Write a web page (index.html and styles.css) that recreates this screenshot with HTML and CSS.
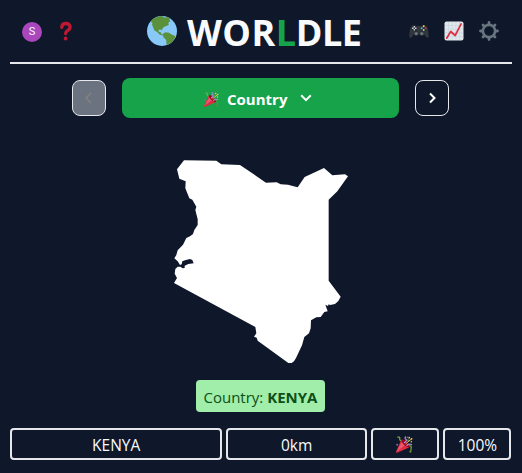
FILE: index.html
```html
<!DOCTYPE html>
<html lang="en">
<head>
<meta charset="utf-8">
<title>Worldle</title>
<link rel="stylesheet" href="styles.css">
</head>
<body>
<svg class="defs" aria-hidden="true">
  <symbol id="party" viewBox="0 0 36 36">
    <path fill="#A0041E" d="M23 13c4.700 4.700 7 9.700 5.400 11.200s-6.500-.8-11.200-5.400-7-9.600-5.500-11.200S18.400 8.300 23 13z"/>
    <path fill="#DD2E44" d="M11.600 7.600c-.2.2-.3.4-.4.6L.1 33.100c-.3.6.1 1.300.5 1.900.5.6 1.200.9 1.900.7l25.100-11.100c.2-.1.4-.2.5-.4-1 .8-6.300-.8-11-5.500S10.500 9 11.600 7.600z"/>
    <path fill="#EA596E" d="M12 14 1 33l8-6 9-7z"/>
    <path fill="none" stroke="#AA8DD8" stroke-width="2.800" stroke-linecap="round" d="M18 14q6-4 3-7-3-1-1-5"/>
    <path fill="none" stroke="#77B255" stroke-width="2.600" stroke-linecap="round" d="M4 2.500q5-1 4 3-1 3 2 4"/>
    <path fill="none" stroke="#5C913B" stroke-width="3.200" stroke-linecap="round" d="M29 20.500q5 1 3 5 0 4-1 8"/>
    <path fill="none" stroke="#AA8DD8" stroke-width="2.600" stroke-linecap="round" d="M23 20q4-4 10-2"/>
    <path fill="none" stroke="#FFCC4D" stroke-width="2" stroke-linecap="round" d="M21 16 32 7"/>
    <g fill="#5C913B"><circle cx="25.500" cy="9" r="2"/><circle cx="30" cy="33" r="2"/></g>
    <g fill="#9266CC"><circle cx="2.500" cy="18.500" r="2"/><circle cx="24" cy="2.500" r="1.600"/></g>
    <g fill="#FFCC4D"><circle cx="28" cy="3.500" r="1.800"/><circle cx="33" cy="6" r="1.900"/><circle cx="32.500" cy="12" r="1.600"/></g>
  </symbol>
</svg>
<div class="app">
  <header class="header">
    <div class="tools">
      <span class="avatar">S</span>
      <svg class="question" viewBox="0 0 14 20"><path d="M2.700 6.300C2.900 3.700 4.600 2.500 7 2.500c2.400 0 4.100 1.500 4.100 3.800 0 3.300-4.500 2.800-4.500 6.200" fill="none" stroke="#BE1931" stroke-width="3.300" stroke-linecap="round"/><circle cx="6.600" cy="17.500" r="1.900" fill="#BE1931"/></svg>
    </div>
    <div class="brand">
      <svg class="globe" viewBox="0 0 30 30">
        <circle cx="15" cy="15" r="15" fill="#88C9F9"/>
        <path fill="#5C913B" d="M3.500 5.500C6 2.500 10 .6 13.500.1l2.500.4 1.500 1.200 3-.7 2.700 1.300-.9 1.300 1 1.700-2 1.400.4 2.200-2.400 1.200-2 .6-1.600 1.600-.9 2-1.400-.9-1.900.7.4 1.700 1.900.5.6 1.600 1.900.8-.8.800-3-1-2.400-2.500-2.700-1.500L6 11 5 8.500 5.500 7z"/>
        <path fill="#5C913B" d="m16.300 17.500 2.200-1.200 3.500.5 2.200 1.500 3.600 1.500.5 1.600-1.900 2.700-1.600 2.300-2.600 1.200-1.400 1.500-1.300-.7-.3-4.500-2.600-2.400-.8-2.200z"/>
      </svg>
      <h1 class="title"><span class="lead">WOR</span><span class="accent">L</span>DLE</h1>
    </div>
    <div class="tools tools-right">
      <svg class="icon" viewBox="0 0 20 20">
        <path fill="#31373D" d="M.3 15.500C.2 11.500 1.200 6 2.700 4.800c1.200-1 3.200-1 4.300 0 .4.500 5.500.5 6 0 1.100-1 3.100-1 4.300 0 1.500 1.200 2.500 6.700 2.400 10.700-.1 2-2.200 1.500-3 .1l-1.500-2.300H4.800l-1.500 2.300c-.8 1.400-2.900 1.900-3-.1z"/>
        <circle cx="5.300" cy="7.200" r="2.900" fill="#24292d"/><circle cx="14.700" cy="7.200" r="2.900" fill="#24292d"/>
        <circle cx="7.200" cy="12.600" r="2.500" fill="#292F33"/><circle cx="12.800" cy="12.600" r="2.500" fill="#292F33"/>
        <circle cx="7.200" cy="12.600" r="1.700" fill="#66757F"/><circle cx="12.800" cy="12.600" r="1.700" fill="#66757F"/>
        <path d="M5.300 5v1.500M5.300 7.900v1.500M3.100 7.200h1.500M6 7.200h1.500" stroke="#CCD6DD" stroke-width="1.400"/>
        <circle cx="14.700" cy="5.300" r="1" fill="#FFCC4D"/><circle cx="16.700" cy="7.200" r="1" fill="#DD2E44"/><circle cx="12.700" cy="7.200" r="1" fill="#55ACEE"/><circle cx="14.700" cy="9.100" r="1" fill="#A6D388"/>
      </svg>
      <svg class="icon" viewBox="0 0 20 20">
        <rect x=".5" y=".5" width="19" height="19" rx="2" fill="#E1E8ED"/>
        <path d="M4.500 1v18M8.200 1v18M11.900 1v18M15.600 1v18M1 4.500h18M1 8.200h18M1 11.900h18M1 15.600h18" stroke="#CCD6DD" stroke-width=".8"/>
        <path d="m2.700 17.200 4-6.700 4.500 4 5.900-11.600" fill="none" stroke="#DD2E44" stroke-width="1.700" stroke-linecap="round" stroke-linejoin="round"/>
      </svg>
      <svg class="icon gear" viewBox="0 0 20 20">
        <circle cx="10" cy="10" r="6.100" fill="none" stroke="#66757F" stroke-width="2.600"/>
        <g stroke="#66757F" stroke-width="2.800" stroke-linecap="round"><path d="M10 1.500v1.500M10 17v1.500M1.500 10H3M17 10h1.500M4 4l1.200 1.200M14.800 14.800 16 16M4 16l1.200-1.200M14.800 5.200 16 4"/></g>
      </svg>
    </div>
  </header>

  <nav class="picker">
    <button class="step step-off" disabled><svg viewBox="0 0 12 12"><path d="M8 1 3 6l5 5"/></svg></button>
    <button class="round"><svg class="party-small"><use href="#party"/></svg><span class="round-name">Country</span><svg class="chevron" viewBox="0 0 12 8"><path d="m1.200 1.300 4.800 4.800 4.800-4.800"/></svg></button>
    <button class="step"><svg viewBox="0 0 12 12"><path d="m4 1.500 4.500 4.500L4 10.500"/></svg></button>
  </nav>

  <svg class="shape" viewBox="0 0 570 660">
    <path fill="#fff" d="M57 31 154 32 169 43 225 45 303 98 335 97 347 103 369 104 386 109 398 112 419 81 440 71 477 54 502 76 540 73 549 79 517 124 491 149V392L527 440 520 453 510 462 495 465 491 463 489 468 481 464 488 484 478 486 467 501 454 502 438 511 437 535 432 550 418 561 411 586 393 624 387 634 380 639H370L278 572 275 563 267 560 274 550 271 531 27 399 36 384 29 371 31 357 38 350 46 350 53 355 59 354 59 347 70 342 86 340 82 330 75 327 60 331 52 334 50 343 45 345 38 334 28 325 34 315 38 301 54 284 64 264 75 259 84 252 88 240 98 225V208L91 180 94 170 82 149 73 145 61 115 62 94 43 86 36 58z"/>
  </svg>

  <div class="answer">Country: <b>KENYA</b></div>

  <div class="guess">
    <div class="cell name">KENYA</div>
    <div class="cell distance">0km</div>
    <div class="cell"><svg class="party"><use href="#party"/></svg></div>
    <div class="cell percent">100%</div>
  </div>
</div>
</body>
</html>
```

FILE: styles.css
```css
* { box-sizing: border-box; }
body {
  margin: 0;
  background: #0f172a;
  color: #f8fafc;
  font: 16px/24px "Open Sans", "Noto Sans", sans-serif;
  overflow: hidden;
}
svg { display: block; flex: none; }
.defs { width: 0; height: 0; position: absolute; }
.app {
  width: 502px;
  margin: 0 10px;
  display: flex;
  flex-direction: column;
  align-items: center;
}
.header {
  width: 100%;
  height: 64px;
  border-bottom: 2px solid #e5e7eb;
  display: grid;
  grid-template-columns: 137px 1fr 103px;
  align-items: center;
}
.tools { display: flex; align-items: center; padding-left: 12px; }
.tools-right { padding-left: 0; gap: 15px; }
.avatar {
  width: 20px;
  height: 20px;
  border-radius: 50%;
  background: #ab47bc;
  font: 11px/20px Roboto, sans-serif;
  text-align: center;
  margin-top: 2px;
}
.question { width: 14px; height: 20px; margin-left: 17px; }
.brand { display: flex; align-items: center; }
.globe { width: 30px; height: 30px; }
.title {
  margin: 4px 0 0 10px;
  font-size: 36px;
  line-height: 40px;
  font-weight: 700;
  letter-spacing: -0.4px;
  white-space: nowrap;
}
.lead { letter-spacing: 0.5px; }
.accent { color: #16a34a; }
.icon { width: 20px; height: 20px; }
.picker {
  display: flex;
  align-items: center;
  gap: 16px;
  height: 40px;
  margin: 14px 1px 0 0;
}
button { font: inherit; color: #fff; padding: 0; }
.step {
  width: 34px;
  height: 36px;
  border: 1px solid #e5e7eb;
  border-radius: 8px;
  background: none;
  display: flex;
  align-items: center;
  justify-content: center;
}
.step svg { width: 12px; height: 12px; }
.step path, .chevron path { fill: none; stroke: currentColor; stroke-width: 2; }
.step-off { background: #6b7280; color: #85827d; }
.step-off path { stroke-width: 1.5; }
.round {
  width: 277px;
  height: 40px;
  border: 0;
  border-radius: 8px;
  background: #16a34a;
  display: flex;
  align-items: center;
  padding-left: 82px;
}
.party-small { width: 15px; height: 15px; margin-top: 2px; }
.round-name { width: 59px; margin: 2px 0 0 8px; font-weight: 700; font-size: 15px; white-space: nowrap; }
.chevron { width: 12px; height: 8px; margin-left: 14px; }
.shape { width: 190px; height: 220px; margin: 32px 2px 0 0; }
.answer {
  width: 129px;
  height: 32px;
  margin: 10px 1px 0 0;
  padding-top: 5px;
  border-radius: 4px;
  background: #a0eeaa;
  color: #0c4f18;
  font-size: 15px;
  text-align: center;
  white-space: nowrap;
}
.guess {
  width: 501px;
  margin: 16px 1px 0 0;
  display: grid;
  grid-template-columns: repeat(7, 1fr);
  gap: 4px;
}
.cell {
  height: 32px;
  border: 2px solid #e5e7eb;
  border-radius: 4px;
  display: flex;
  align-items: center;
  justify-content: center;
  padding-top: 2px;
  font-size: 15.5px;
}
.name { grid-column: span 3; }
.distance { grid-column: span 2; }
.percent { padding-left: 1px; }
.party { width: 17px; height: 17px; margin-top: -2px; }
```
